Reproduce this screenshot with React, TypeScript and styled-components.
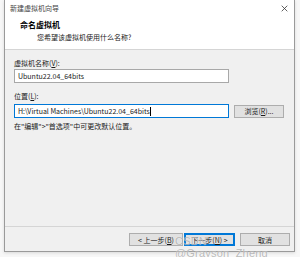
import styled, { createGlobalStyle } from 'styled-components';

const GlobalStyle = createGlobalStyle`
  html, body {
    margin: 0;
    padding: 0;
    background: #f7f7f7;
  }
  body {
    font-family: "Noto Sans CJK SC", "Noto Sans", sans-serif;
    font-size: 7px;
    color: #1a1a1a;
  }
`;

const Page = styled.div`
  position: relative;
  width: 300px;
  height: 257px;
  padding: 0 5px 0 4px;
  box-sizing: border-box;
`;

const Window = styled.div`
  display: flex;
  flex-direction: column;
  height: 251px;
  border: 1px solid #9a9a9a;
  border-top: none;
  background: #f0f0f0;
  box-shadow: 0 1px 3px rgba(0, 0, 0, 0.12);
`;

const TitleBar = styled.div`
  display: flex;
  align-items: center;
  justify-content: space-between;
  height: 16px;
  padding: 0 5px 0 5px;
  background: #ffffff;
`;

const TitleText = styled.span`
  font-size: 7px;
  color: #444;
`;

const CloseIcon = styled.svg`
  width: 7px;
  height: 7px;
  margin-right: 1px;
`;

const Header = styled.div`
  display: flex;
  flex-direction: column;
  height: 34px;
  padding: 3px 0 0 15px;
  box-sizing: border-box;
  background: #ffffff;
  border-bottom: 1px solid #d5d5d5;
`;

const HeaderTitle = styled.div`
  font-size: 8px;
  font-weight: 700;
  line-height: 12px;
  color: #000;
`;

const HeaderSub = styled.div`
  font-size: 7px;
  line-height: 12px;
  padding-left: 17px;
  color: #222;
`;

const Body = styled.div`
  display: flex;
  flex-direction: column;
  height: 177px;
  padding: 8px 0 0 9px;
  box-sizing: border-box;
  border-bottom: 1px solid #d5d5d5;
`;

const Label = styled.div<{ $gap?: number }>`
  line-height: 10px;
  margin-top: ${({ $gap }) => $gap ?? 0}px;
`;

const Row = styled.div<{ $gap?: number }>`
  display: flex;
  align-items: center;
  gap: 5px;
  margin-top: ${({ $gap }) => $gap ?? 0}px;
`;

const TextBox = styled.div<{ $focused?: boolean }>`
  display: flex;
  align-items: center;
  width: 215px;
  height: 14px;
  padding-left: 3px;
  box-sizing: border-box;
  background: #ffffff;
  border: 1px solid ${({ $focused }) => ($focused ? '#0078d7' : '#a8a8a8')};
  white-space: nowrap;
  overflow: hidden;
`;

const Caret = styled.span`
  display: inline-block;
  width: 1px;
  height: 9px;
  background: #000;
`;

const Button = styled.div<{ $w: number; $default?: boolean }>`
  display: flex;
  align-items: center;
  justify-content: center;
  width: ${({ $w }) => $w}px;
  height: 13px;
  box-sizing: border-box;
  background: #e1e1e1;
  border: 1px solid ${({ $default }) => ($default ? '#0078d7' : '#adadad')};
  box-shadow: ${({ $default }) => ($default ? 'inset 0 0 0 1px #0078d7' : 'none')};
  font-size: 7px;
  white-space: pre;
`;

const Hint = styled.div`
  line-height: 10px;
  margin-top: 3px;
`;

const Footer = styled.div`
  display: flex;
  justify-content: flex-end;
  align-items: flex-start;
  flex: 1;
  padding: 6px 4px 0 0;
`;

const ButtonGroup = styled.div`
  display: flex;
  gap: 1px;
  margin-right: 5px;
`;

const Watermark = styled.div`
  position: absolute;
  left: 175px;
  top: 235px;
  font-family: "Liberation Sans", Arial, sans-serif;
  font-size: 11px;
  line-height: 12px;
  letter-spacing: 0.2px;
  color: rgba(140, 140, 140, 0.6);
  text-shadow: 0 0 1px rgba(255, 255, 255, 0.9);
  pointer-events: none;
`;

export default function App() {
  return (
    <>
      <GlobalStyle />
      <Page>
        <Window>
          <TitleBar>
            <TitleText>新建虚拟机向导</TitleText>
            <CloseIcon viewBox="0 0 10 10">
              <path d="M1 1 L9 9 M9 1 L1 9" stroke="#333" strokeWidth="1.1" />
            </CloseIcon>
          </TitleBar>
          <Header>
            <HeaderTitle>命名虚拟机</HeaderTitle>
            <HeaderSub>您希望该虚拟机使用什么名称?</HeaderSub>
          </Header>
          <Body>
            <Label>
              虚拟机名称(<u>V</u>):
            </Label>
            <Row $gap={1}>
              <TextBox>Ubuntu22.04_64bits</TextBox>
            </Row>
            <Label $gap={8}>
              位置(<u>L</u>):
            </Label>
            <Row $gap={3}>
              <TextBox $focused>
                {'H:\\Virtual Machines\\Ubuntu22.04_64bits'}
                <Caret />
              </TextBox>
              <Button $w={50}>
                浏览(<u>R</u>)...
              </Button>
            </Row>
            <Hint>{'在"编辑">"首选项"中可更改默认位置。'}</Hint>
          </Body>
          <Footer>
            <ButtonGroup>
              <Button $w={54}>
                {'< 上一步('}<u>B</u>)
              </Button>
              <Button $w={51} $default>
                {'下一步('}<u>N</u>{') >'}
              </Button>
            </ButtonGroup>
            <Button $w={50}>取消</Button>
          </Footer>
        </Window>
        <Watermark>CSDN @Grayson_Zheng</Watermark>
      </Page>
    </>
  );
}
